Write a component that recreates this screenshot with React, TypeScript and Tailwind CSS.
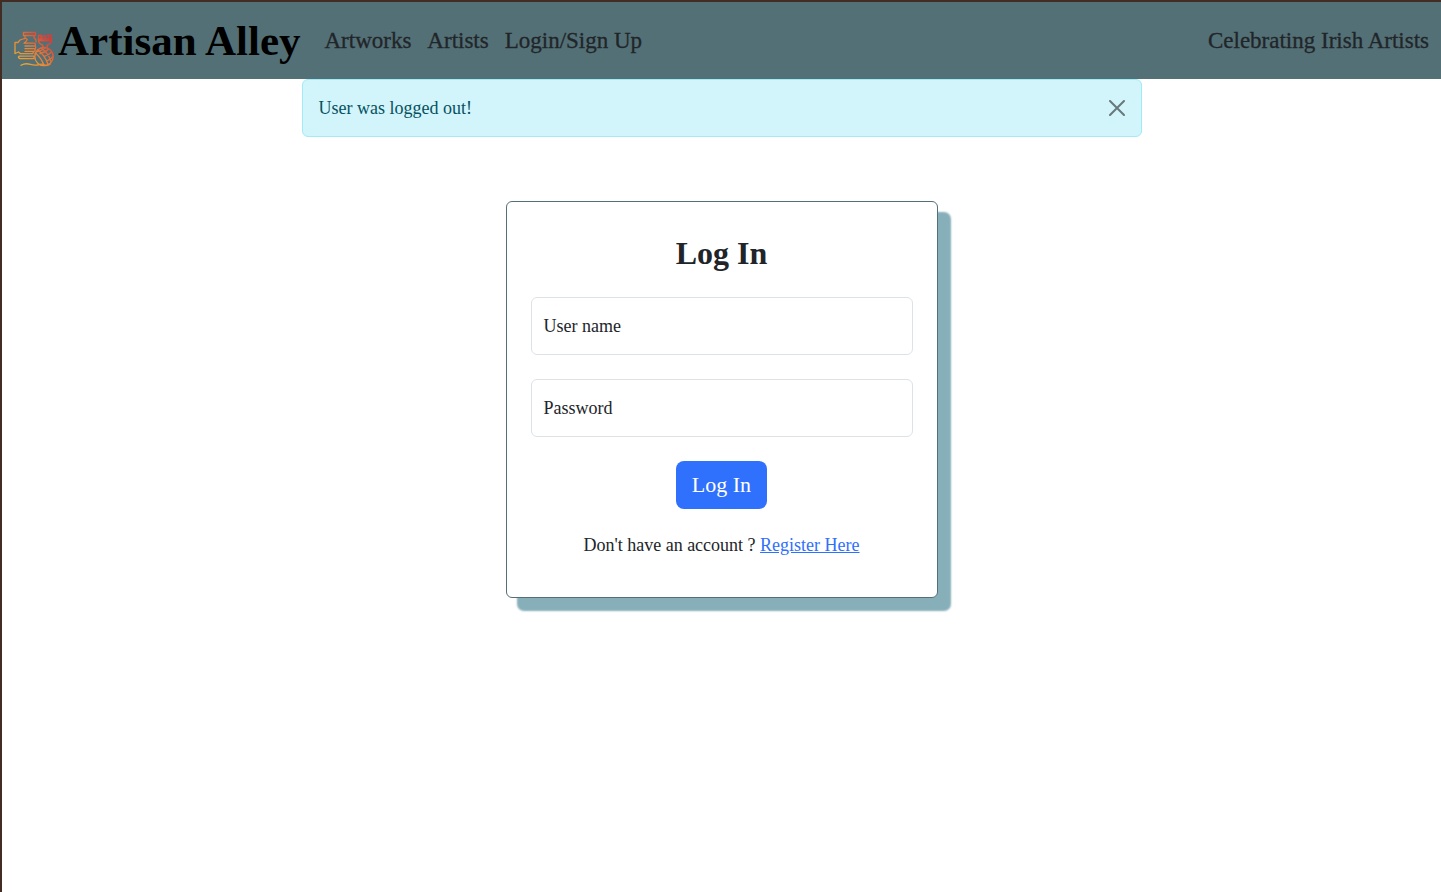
import { useState } from "react";
import type { FormEvent } from "react";

function Logo() {
  return (
    <svg viewBox="0 0 40 36" className="mt-4 h-9 w-10 shrink-0" fill="none" stroke="url(#warm)" strokeWidth="1.3" strokeLinejoin="round" strokeLinecap="round" aria-hidden="true">
      <defs>
        <linearGradient id="warm" gradientUnits="userSpaceOnUse" x1="3" y1="32" x2="30" y2="3">
          <stop offset="0" stopColor="#e9ae35" />
          <stop offset="0.5" stopColor="#e78238" />
          <stop offset="1" stopColor="#dc3b36" />
        </linearGradient>
      </defs>
      <path d="M9.500 1.500h12v3h-12zM11 4.500v2M20 4.500v2l2 2.500v2" />
      <path d="M1 22.500V11.500h3L6 9l4.500-1.500q2.500-.5 2.700 1.200-.4 1.500-3.200 3.500h10q1.500 0 1.500 1.400t-1.500 1.400h-9M20.500 15q1.200 0 1.200 1.400t-1.200 1.300h-9.500M20 17.700q1.200 0 1.200 1.300T20 20.300h-9M19 20.300q1 2.400-1.500 2.400H6.500L4.500 21 1 22.500" />
      <path d="M5 25.200h15v2.500H6q-2.500-1-1-2.500z" />
      <path d="M24.500 4.500h3v2l1.500-1.500h2v1.500l2-2h4.500v5.200h-13zM24.500 8h13M24.500 9.700q0 2.500 4.300 4.500v2M37.500 9.700q0 2.500-4.300 4.500v2M27 4.500v4M34.500 4.500v4" />
      <circle cx="30" cy="25.500" r="9.200" />
      <path d="M21.500 22q6 5 8.500 12.500M23.500 18.800q7.500 5.500 10.500 14.500M27 17q7.500 5 10 13.500M22.500 20.500q4.500 0 9-4M26 22.500q5.500-1 8.500-4.500M30 25.500q5-1.500 7.500-4.500M33.500 29.500q3-1 5-3.500" />
      <path d="M7 34.200q4.500-2.400 9.500-.8t9.500 0q2-.8 4 .4t6-.3" />
    </svg>
  );
}

function Field({ id, type, label }: { id: string; type: string; label: string }) {
  return (
    <div className="relative">
      <input
        id={id}
        name={id}
        type={type}
        placeholder=" "
        className="peer block h-[58px] w-full rounded-md border border-[#dee2e6] bg-white px-3 pt-5 outline-none focus:border-[#86b7fe] focus:ring-4 focus:ring-[#0d6efd]/25"
      />
      <label
        htmlFor={id}
        className="pointer-events-none absolute left-[13px] top-[17px] peer-focus:top-1 peer-focus:text-sm peer-[:not(:placeholder-shown)]:top-1 peer-[:not(:placeholder-shown)]:text-sm"
      >
        {label}
      </label>
    </div>
  );
}

export default function App() {
  const [alertOpen, setAlertOpen] = useState(true);
  const submit = (event: FormEvent) => event.preventDefault();

  return (
    <div className="min-h-screen border-l-2 border-t-2 border-[#432c24] bg-white font-['Liberation_Serif',serif] text-[18px] leading-6 text-[#212529]">
      <header className="flex min-h-[77px] flex-wrap items-center justify-between bg-[#537076] px-3">
        <div className="flex flex-wrap items-center gap-6">
          <a href="#home" className="flex items-center gap-1 text-[43px] font-bold leading-[50px] text-black">
            <Logo />
            Artisan Alley
          </a>
          <nav className="flex gap-4 text-[23px] [-webkit-text-stroke:0.3px_currentColor]">
            <a href="#artworks">Artworks</a>
            <a href="#artists">Artists</a>
            <a href="#login">Login/Sign Up</a>
          </nav>
        </div>
        <p className="text-[23px] [-webkit-text-stroke:0.3px_currentColor]">Celebrating Irish Artists</p>
      </header>

      <main>
        <div className="mx-auto h-[58px] w-full max-w-[840px]">
          {alertOpen && (
            <div role="alert" className="flex h-full items-center justify-between rounded-md border border-[#a3eaf7] bg-[#d2f4fb] px-4 text-[#055160]">
              User was logged out!
              <button type="button" aria-label="Close" onClick={() => setAlertOpen(false)} className="text-black opacity-50 hover:opacity-75">
                <svg viewBox="0 0 16 16" className="size-4" fill="none" stroke="currentColor" strokeWidth="2" strokeLinecap="round" aria-hidden="true">
                  <path d="M1 1l14 14M15 1L1 15" />
                </svg>
              </button>
            </div>
          )}
        </div>

        <section className="mx-auto mt-16 w-full max-w-[432px] rounded-md border border-[#537076] bg-white px-6 pb-10 pt-8 shadow-[12px_12px_2px_1px_#86afb9]">
          <h1 className="text-center text-[32px] font-bold leading-[39px]">Log In</h1>
          <form onSubmit={submit} className="mt-6 flex flex-col gap-6">
            <Field id="username" type="text" label="User name" />
            <Field id="password" type="password" label="Password" />
            <button type="submit" className="h-12 self-center rounded-lg bg-[#2f70fc] px-4 text-[22px] text-white hover:bg-[#0b5ed7]">
              Log In
            </button>
          </form>
          <p className="mt-6 text-center">
            Don't have an account ?{" "}
            <a href="#register" className="text-[#2f70fc] underline">
              Register Here
            </a>
          </p>
        </section>
      </main>
    </div>
  );
}
